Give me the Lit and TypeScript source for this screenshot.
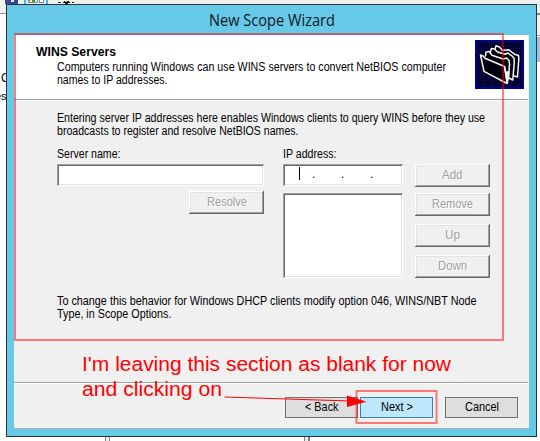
import { LitElement, html, css, svg } from "lit";
import { customElement, property } from "lit/decorators.js";

/* A single line of text, condensed or widened to fill an exact width. */
@customElement("fit-line")
class FitLine extends LitElement {
  @property({ type: Number }) width = 0;
  @property() text = "";
  static styles = css`
    :host { display: block; white-space: pre; }
    .box { display: block; }
    .run { display: inline-block; transform-origin: 0 50%; }
  `;
  firstUpdated() {
    const run = this.renderRoot.querySelector(".run") as HTMLElement;
    const natural = run.getBoundingClientRect().width;
    run.style.transform = `scaleX(${this.width / natural})`;
  }
  render() {
    return html`<span class="box" style="width:${this.width}px"><span class="run">${this.text}</span></span>`;
  }
}

const line = (text: string, width: number) =>
  html`<fit-line .text=${text} .width=${width}></fit-line>`;

@customElement("classic-button")
class ClassicButton extends LitElement {
  @property() label = "";
  @property({ type: Number }) width = 0;
  static styles = css`
    :host { display: block; width: 75px; height: 23px; }
    .face {
      box-sizing: border-box; width: 75px; height: 23px; display: flex;
      justify-content: center; padding-top: 5px; line-height: 13px;
      color: #a0a0a0; text-shadow: 1px 1px 0 #fff; background: #f0f0f0;
      box-shadow: inset -1px -1px #696969, inset 1px 1px #fff,
        inset -2px -2px #a0a0a0, inset 2px 2px #e3e3e3;
    }
  `;
  render() {
    return html`<div class="face">${line(this.label, this.width)}</div>`;
  }
}

const folderIcon = svg`
  <svg width="49" height="49" viewBox="0 0 49 49">
    <defs>
      <pattern id="dither" width="2" height="2" patternUnits="userSpaceOnUse">
        <rect width="2" height="2" fill="#000008"/>
        <rect width="1" height="1" fill="#0000b8" shape-rendering="crispEdges"/>
      </pattern>
      <pattern id="edge" width="2" height="2" patternUnits="userSpaceOnUse">
        <rect width="2" height="2" fill="#000020"/>
        <path d="M0 0h1v1H0zM1 1h1v1H1z" fill="#0000f0" shape-rendering="crispEdges"/>
      </pattern>
    </defs>
    <rect width="49" height="49" fill="url(#edge)"/>
    <rect x="2" y="2" width="45" height="45" fill="url(#dither)"/>
    <g fill="#000010" stroke="#f8f8f0" stroke-width="1.5" stroke-linejoin="round" stroke-linecap="round">
      <path d="M20 9 21 5.8 24.5 7 27.5 10.5 34 9.8 36.5 12 39.5 14.2 43.5 15.5 43.8 19 42.5 37 39.2 36"/>
      <path d="M15.5 12 16.3 8.5 19 8.8 22.5 12 30 14.2 33 13 37 16 39.2 18.5 39.2 23 37.8 40 34 38"/>
      <path d="M10.5 16 11 12.2 14 11.5 17 15.2 28 19 31.5 18 34 20.5 34.5 24 33.5 39"/>
      <path d="M5.5 15 9 31.3 32 43.5 29.5 26.5 10 18.2 8 16Z"/>
      <path d="M29.8 27 32.4 43 33.8 32 31.2 32" fill="#f8f8f0"/>
    </g>
  </svg>`;

@customElement("app-root")
class AppRoot extends LitElement {
  static styles = css`
    :host {
      display: block; position: relative; width: 540px; height: 441px; overflow: hidden;
      background: #fff; color: #000; font: 12px/13px "Liberation Sans", Arial, sans-serif;
    }
    .behind { position: absolute; left: 0; top: 0; }
    .dialog {
      position: relative; box-sizing: border-box; width: 531px; height: 433px;
      margin: 4px 0 0 6px; border: 1px solid #2d3237; background: #66c9e8;
      padding: 0 7px 7px; display: flex; flex-direction: column;
    }
    .title {
      height: 30px; display: flex; justify-content: center; padding-left: 0;
      font: 15.6px/30px "Open Sans", "Noto Sans", sans-serif; color: #101820;
    }
    .client { flex: 1; background: #f0f0f0; display: flex; flex-direction: column; border-bottom: 1px solid #a5b5bb; }
    .header {
      height: 64px; background: #fff; border-bottom: 1px solid #a0a0a0; margin-right: 1px;
      display: flex; justify-content: space-between; box-shadow: 0 1px #fff; padding-right: 4px;
    }
    .heading { padding: 11px 0 0 22px; }
    .heading b { display: block; height: 15px; line-height: 13px; }
    .sub { padding-left: 21px; }
    .art { margin-top: 5px; height: 49px; }
    .content { padding: 12px 0 0 43px; height: 282px; box-sizing: border-box; }
    .fields { display: grid; grid-template-columns: 207px 120px 75px; column-gap: 19px; margin-top: 10px; height: 131px; }
    .label { height: 16px; }
    .sunk {
      height: 22px; box-sizing: border-box; background: #fff; display: flex;
      box-shadow: inset 1px 1px #a0a0a0, inset -1px -1px #fff, inset 2px 2px #696969, inset -2px -2px #e3e3e3;
    }
    .list { height: 85px; margin-top: 7px; }
    .ip { padding: 3px 0 0 16px; }
    .caret { width: 1px; height: 13px; background: #000; }
    .dot { width: 28px; padding-left: 1px; line-height: 14px; }
    .gap { width: 11px; }
    .resolve { display: flex; justify-content: flex-end; margin-top: 5px; }
    .column { display: grid; grid-template-rows: 29px 31px 31px 23px; padding-top: 16px; margin-left: -7px; }
    .note { margin-top: 16px; }
    .rule { height: 1px; background: #a0a0a0; border-bottom: 1px solid #fff; margin-right: 1px; }
    .footer { display: flex; padding: 13px 0 0 271px; }
    .flat {
      box-sizing: border-box; width: 73px; height: 21px; border: 1px solid #707070; background: #dedede;
      display: flex; justify-content: center; padding-top: 3px;
    }
    .next { margin: 0 12px 0 2px; background: #bee6fd; border-color: #3c7fb1; }
    .marks { position: absolute; left: 0; top: 0; }
    .callout {
      position: absolute; left: 82px; top: 352px; color: #f00;
      font: 20px/25px "Liberation Sans", Arial, sans-serif;
    }
  `;

  backdrop() {
    return html`<svg class="behind" width="540" height="441" shape-rendering="crispEdges">
      <rect width="540" height="13" fill="#f0f0ef" />
      <rect y="13" width="6" height="1" fill="#929292" />
      <rect x="5" width="13" height="4" fill="#39489b" /><rect x="11" width="3" height="2" fill="#dce7ff" />
      <rect x="24" width="24" height="4" fill="#45b8df" /><rect x="26" width="20" height="4" fill="#e5edf2" />
      <rect x="28" width="10" height="3" fill="#8a8f96" /><rect x="30" width="7" height="2" fill="#e8f3da" />
      <rect x="32" width="3" height="2" fill="#3c9b35" /><rect x="39" width="5" height="3" fill="#7988aa" />
      <rect x="40" width="3" height="2" fill="#fff" />
      <path d="M58 2.5h3m2 0h7m2 0h2M64 1.5h5M65 3.5h3" stroke="#111" />
      <rect x="65" y="1" width="2" height="1" fill="#d5c52c" />
      <rect x="537" y="13" width="3" height="2" fill="#858585" />
      <rect x="537" y="15" width="3" height="20" fill="#f0f0f0" />
      <rect x="537" y="35" width="3" height="1" fill="#999" />
      <rect x="537" y="37" width="3" height="25" fill="#a5bedb" />
      <rect x="105" y="437" width="5" height="4" fill="#808080" /><rect x="106" y="437" width="3" height="4" fill="#eee" />
      <rect x="304" y="437" width="6" height="4" fill="#808080" /><rect x="305" y="437" width="3" height="4" fill="#eee" />
      <text x="1" y="82" font-size="12">C</text>
      <text x="-5" y="100" font-size="11">es</text>
    </svg>`;
  }

  render() {
    return html`
      ${this.backdrop()}
      <div class="dialog">
        <div class="title">${line("New Scope Wizard", 126)}</div>
        <div class="client">
          <div class="header">
            <div class="heading">
              <b>${line("WINS Servers", 80)}</b>
              <div class="sub">
                ${line("Computers running Windows can use WINS servers to convert NetBIOS computer", 389)}
                ${line("names to IP addresses.", 110.5)}
              </div>
            </div>
            <div class="art">${folderIcon}</div>
          </div>
          <div class="content">
            ${line("Entering server IP addresses here enables Windows clients to query WINS before they use", 428)}
            ${line("broadcasts to register and resolve NetBIOS names.", 241.5)}
            <div class="fields">
              <div>
                <div class="label">${line("Server name:", 63.5)}</div>
                <div class="sunk"></div>
                <div class="resolve"><classic-button label="Resolve" width="40"></classic-button></div>
              </div>
              <div>
                <div class="label">${line("IP address:", 53.5)}</div>
                <div class="sunk ip">
                  <div class="caret"></div><div class="gap"></div>
                  <div class="dot">.</div><div class="dot">.</div><div class="dot">.</div>
                </div>
                <div class="sunk list"></div>
              </div>
              <div class="column">
                <classic-button label="Add" width="20.5"></classic-button>
                <classic-button label="Remove" width="41"></classic-button>
                <classic-button label="Up" width="15"></classic-button>
                <classic-button label="Down" width="29"></classic-button>
              </div>
            </div>
            <div class="note">
              ${line("To change this behavior for Windows DHCP clients modify option 046, WINS/NBT Node", 419.5)}
              ${line("Type, in Scope Options.", 114.5)}
            </div>
          </div>
          <div class="rule"></div>
          <div class="footer">
            <div class="flat">${line("< Back", 33.5)}</div>
            <div class="flat next">${line("Next >", 32)}</div>
            <div class="flat">${line("Cancel", 34)}</div>
          </div>
        </div>
      </div>
      <svg class="marks" width="540" height="441" fill="none" stroke="#f00">
        <rect x="15" y="34" width="488" height="306" stroke-width="2" stroke-opacity="0.5" />
        <rect x="356.5" y="391" width="80" height="32" stroke-width="2" stroke-opacity="0.5" />
        <path d="M224.5 397 350 401" />
        <path d="M347 395.5 366.5 401.8 347 407Z" fill="#f00" stroke="none" />
      </svg>
      <div class="callout">
        ${line("I'm leaving this section as blank for now", 369)}
        ${line("and clicking on", 140)}
      </div>
    `;
  }
}
